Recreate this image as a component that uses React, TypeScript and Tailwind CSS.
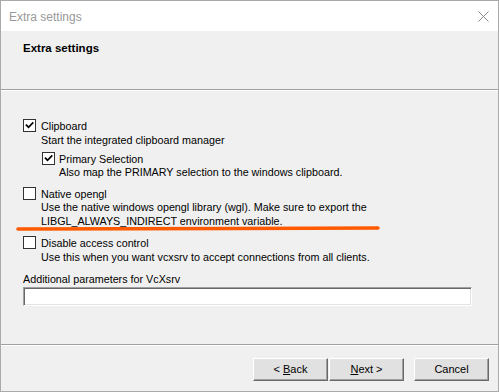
import React from 'react';

const CheckBox = ({ checked }: { checked?: boolean }) => {
  return (
    <div className="w-[13px] h-[13px] shrink-0 border border-[#333333] bg-white relative">
      {checked && (
        <svg width="11" height="11" viewBox="0 0 11 11" className="absolute left-0 top-0">
          <path d="M2.5 5.2 L4.5 7.3 L8.7 3" fill="none" stroke="#000" strokeWidth="1.7" strokeLinecap="square" />
        </svg>
      )}
    </div>
  );
};

const Button = ({ children }: { children: React.ReactNode }) => {
  return (
    <div className="w-[75px] h-[23px] flex items-center justify-center bg-[#e1e1e1] border border-t-white border-l-white border-r-[#696969] border-b-[#696969] shadow-[inset_-1px_-1px_0_#a0a0a0,inset_1px_1px_0_#e3e3e3] text-[11px] leading-[13px] text-black">
      {children}
    </div>
  );
};

const App = () => {
  return (
    <div className="w-[499px] h-[392px] border border-[#aaaaaa] bg-[#f0f0f0] flex flex-col relative font-['Liberation_Sans',Arial,sans-serif] text-black overflow-hidden">
      {/* title bar */}
      <div className="h-[30px] bg-white flex items-center justify-between pl-[8px] pr-[9px] shrink-0">
        <div className="text-[12px] text-[#999999] pt-[1px]">Extra settings</div>
        <svg width="11" height="11" viewBox="0 0 11 11">
          <path d="M0.5 0.5 L10.5 10.5 M10.5 0.5 L0.5 10.5" stroke="#8a8a8a" strokeWidth="1" />
        </svg>
      </div>

      {/* header */}
      <div className="h-[58px] shrink-0 pl-[22px] pt-[11px]">
        <div className="text-[11.5px] font-bold leading-[13px]">Extra settings</div>
      </div>
      <div className="h-px bg-[#a0a0a0] shrink-0" />
      <div className="h-px bg-white shrink-0" />

      {/* body */}
      <div className="h-[253px] shrink-0 pl-[22px] pt-[28px] text-[10.75px] leading-[14px]">
        <div className="flex items-center h-[13px] gap-x-[5px]">
          <CheckBox checked />
          <span>Clipboard</span>
        </div>
        <div className="pl-[18px] mt-[1px]">Start the integrated clipboard manager</div>
        <div className="pl-[19px] mt-[5px] flex items-center h-[13px] gap-x-[4px]">
          <CheckBox checked />
          <span>Primary Selection</span>
        </div>
        <div className="pl-[36px]">Also map the PRIMARY selection to the windows clipboard.</div>
        <div className="mt-[8px] flex items-center h-[13px] gap-x-[5px]">
          <CheckBox />
          <span>Native opengl</span>
        </div>
        <div className="pl-[18px]">
          <div>Use the native windows opengl library (wgl). Make sure to export the</div>
          <div>LIBGL_ALWAYS_INDIRECT environment variable.</div>
        </div>
        <div className="mt-[8px] flex items-center h-[13px] gap-x-[5px]">
          <CheckBox />
          <span>Disable access control</span>
        </div>
        <div className="pl-[18px] mt-[1px]">Use this when you want vcxsrv to accept connections from all clients.</div>
        <div className="mt-[8px]">Additional parameters for VcXsrv</div>
        <div className="mt-[1px] w-[449px] h-[19px] bg-white border border-t-[#a0a0a0] border-l-[#a0a0a0] border-r-white border-b-white shadow-[inset_1px_1px_0_#696969,inset_-1px_-1px_0_#e3e3e3]" />
      </div>
      <div className="h-px bg-[#a0a0a0] shrink-0" />
      <div className="h-px bg-white shrink-0" />

      {/* footer */}
      <div className="grow flex items-start justify-end pt-[12px] pr-[9px]">
        <div className="flex">
          <Button>
            &lt; <span className="underline underline-offset-[1px] ml-[3px]">B</span>ack
          </Button>
          <div className="ml-px">
            <Button>
              <span className="underline underline-offset-[1px]">N</span>ext &gt;
            </Button>
          </div>
        </div>
        <div className="ml-[10px]">
          <Button>Cancel</Button>
        </div>
      </div>

      {/* orange annotation stroke */}
      <svg className="absolute left-0 top-0 pointer-events-none" width="499" height="392">
        <path d="M17 228 C 120 227.8, 260 227.4, 377 227" fill="none" stroke="#ff5a00" strokeWidth="3.5" strokeLinecap="round" />
      </svg>
    </div>
  );
};

export default App;
